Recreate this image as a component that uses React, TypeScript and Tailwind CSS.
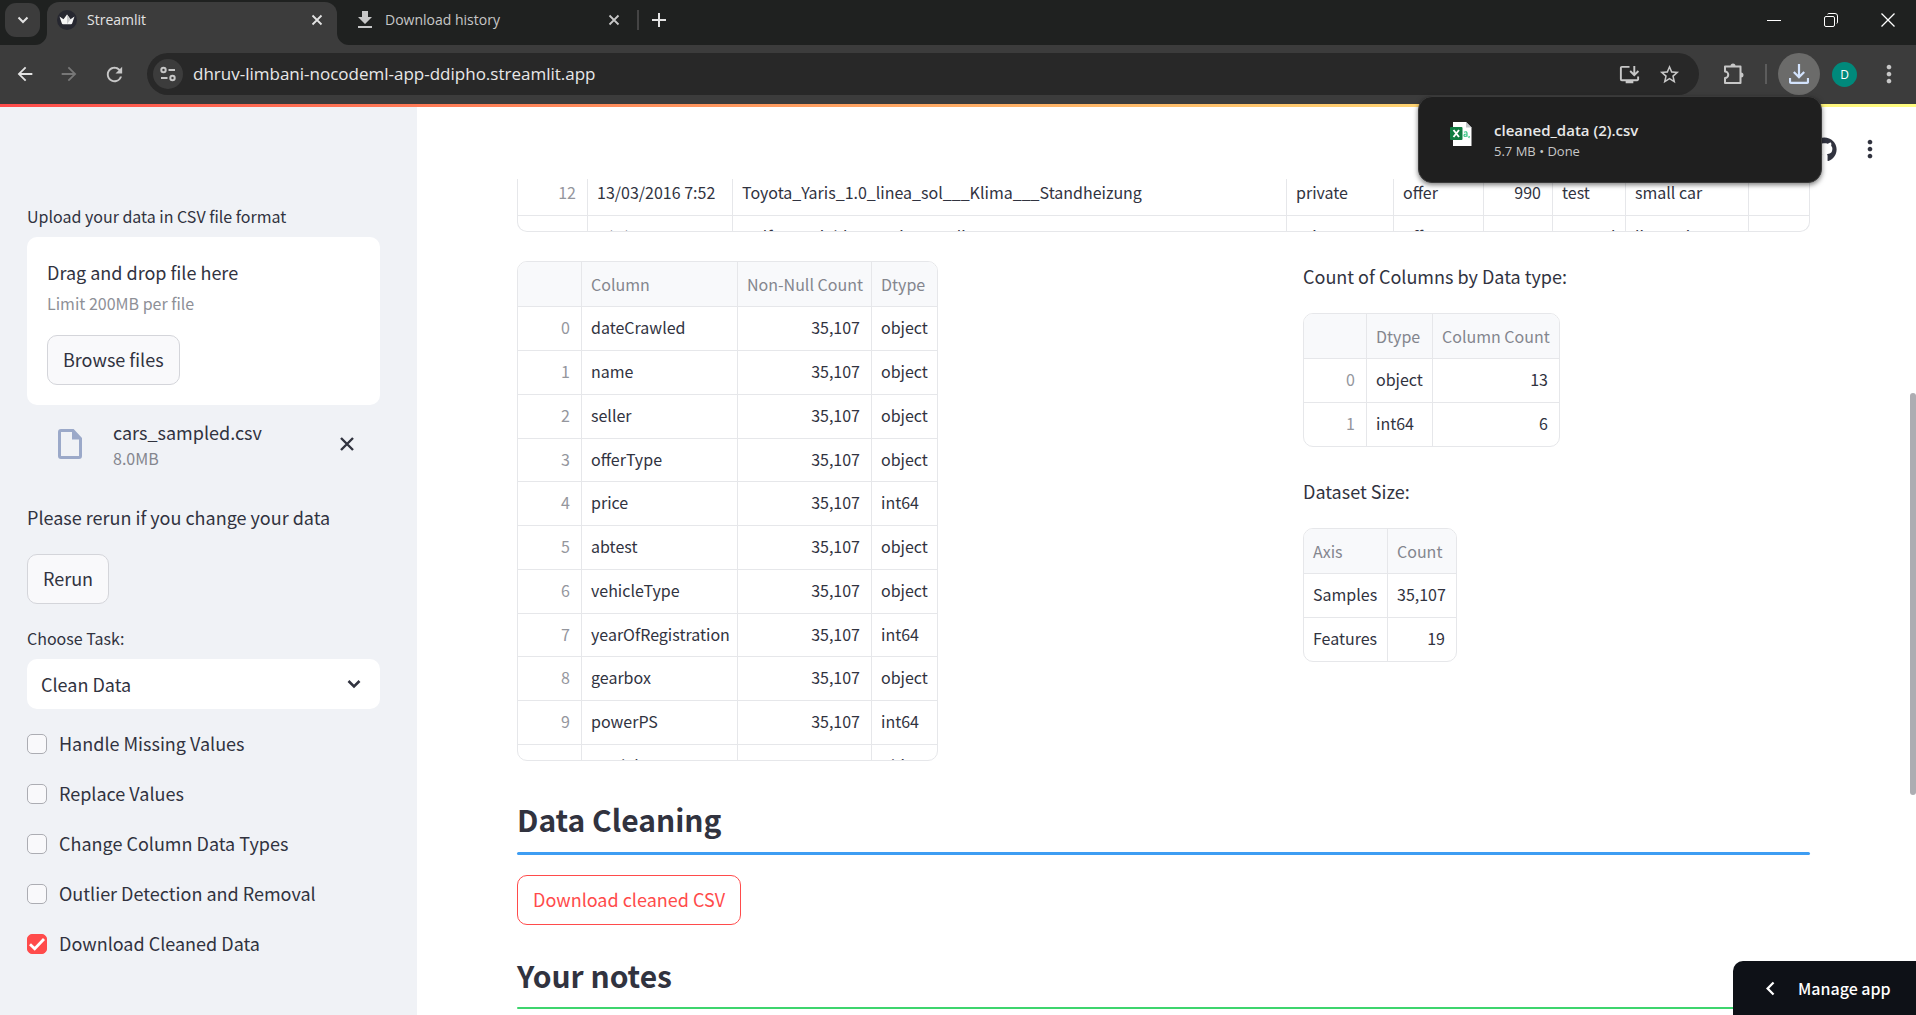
import React from "react";
import { FaGithub } from "react-icons/fa";
import {
  MdArrowBack,
  MdArrowForward,
  MdChevronLeft,
  MdDownload,
  MdMoreVert,
  MdOutlineInstallDesktop,
  MdRefresh,
  MdStarBorder,
} from "react-icons/md";

type Align = "left" | "right";
type Column = { label: string; width?: string; align?: Align; index?: boolean };

const infoColumns: Column[] = [
  { label: "", width: "w-[64px]", align: "right", index: true },
  { label: "Column", width: "w-[156px]" },
  { label: "Non-Null Count", width: "w-[134px]", align: "right" },
  { label: "Dtype", width: "w-[66px]" },
];
const infoRows = [
  ["0", "dateCrawled", "35,107", "object"],
  ["1", "name", "35,107", "object"],
  ["2", "seller", "35,107", "object"],
  ["3", "offerType", "35,107", "object"],
  ["4", "price", "35,107", "int64"],
  ["5", "abtest", "35,107", "object"],
  ["6", "vehicleType", "35,107", "object"],
  ["7", "yearOfRegistration", "35,107", "int64"],
  ["8", "gearbox", "35,107", "object"],
  ["9", "powerPS", "35,107", "int64"],
  ["10", "model", "35,107", "object"],
];

const dtypeColumns: Column[] = [
  { label: "", width: "w-[63px]", align: "right", index: true },
  { label: "Dtype", width: "w-[66px]" },
  { label: "Column Count", width: "w-[126px]", align: "right" },
];
const dtypeRows = [
  ["0", "object", "13"],
  ["1", "int64", "6"],
];

const sizeColumns: Column[] = [
  { label: "Axis", width: "w-[84px]" },
  { label: "Count", width: "w-[68px]", align: "right" },
];
const sizeRows = [
  ["Samples", "35,107"],
  ["Features", "19"],
];

const previewColumns: Column[] = [
  { label: "", width: "w-[70px]", align: "right", index: true },
  { label: "dateCrawled", width: "w-[145px]" },
  { label: "name" },
  { label: "seller", width: "w-[107px]" },
  { label: "offerType", width: "w-[90px]" },
  { label: "price", width: "w-[69px]", align: "right" },
  { label: "abtest", width: "w-[73px]" },
  { label: "vehicleType", width: "w-[123px]" },
  { label: "yearOfRegistration", width: "w-[60px]", align: "right" },
];
const previewRows = [
  ["12", "13/03/2016 7:52", "Toyota_Yaris_1.0_linea_sol___Klima___Standheizung", "private", "offer", "990", "test", "small car", ""],
  ["13", "9/3/2016 21:50", "Golf_4_TDi_blau_Variant__Klima", "private", "offer", "", "control", "limousine", ""],
];

function DataGrid({
  columns,
  rows,
  header = true,
  className = "",
}: {
  columns: Column[];
  rows: string[][];
  header?: boolean;
  className?: string;
}) {
  return (
    <table className={`table-fixed border-separate border-spacing-0 text-base leading-6 ${className}`}>
      <colgroup>
        {columns.map((c, i) => (
          <col key={i} className={c.width ?? ""} />
        ))}
      </colgroup>
      {header && (
        <thead>
          <tr className="h-[45px] bg-[#f8f9fb] text-[#84868e]">
            {columns.map((c, i) => (
              <th
                key={i}
                scope="col"
                className="overflow-hidden border-r border-b border-[#e6e7ea] pr-[9px] pb-[1px] pl-[9px] text-left font-normal whitespace-nowrap last:border-r-0"
              >
                {c.label}
              </th>
            ))}
          </tr>
        </thead>
      )}
      <tbody>
        {rows.map((row, r) => (
          <tr key={r} className="h-[44px] [&:nth-child(4n)]:h-[43px] [&:last-child]:h-[43px] [&:last-child>td]:border-b-0">
            {row.map((value, i) => (
              <td
                key={i}
                className={`overflow-hidden border-r border-b border-[#e6e7ea] pt-0 pr-[11px] pb-[3px] pl-[9px] whitespace-nowrap last:border-r-0 ${
                  columns[i].align === "right" ? "text-right" : "text-left"
                } ${columns[i].index ? "text-[#94969d]" : "text-[#31333f]"}`}
              >
                {value}
              </td>
            ))}
          </tr>
        ))}
      </tbody>
    </table>
  );
}

function CloseIcon({ className }: { className: string }) {
  return (
    <svg viewBox="0 0 12 12" className={className} fill="none" stroke="currentColor" strokeWidth="1.8" aria-hidden="true">
      <path d="M1.5 1.5l9 9M10.5 1.5l-9 9" />
    </svg>
  );
}

function BrowserTabs() {
  return (
    <div className="flex h-[45px] items-end bg-[#1f2120] pl-[5px] text-[#e3e3e3]">
      <button aria-label="Search tabs" className="mb-2 flex h-[34px] w-[35px] items-center justify-center rounded-[11px] bg-[#3c3c3c]">
        <svg viewBox="0 0 12 8" className="h-[8px] w-[12px]" fill="none" stroke="currentColor" strokeWidth="2" aria-hidden="true">
          <path d="M1.5 1.5L6 6l4.500-4.500" />
        </svg>
      </button>
      <div className="relative ml-[7px] flex h-[43px] w-[290px] items-center rounded-t-[12px] bg-[#3c3c3c] pr-[11px] pb-[7px] pl-[10px]">
        <svg viewBox="0 0 12 12" className="absolute bottom-0 -left-[12px] h-3 w-3" aria-hidden="true">
          <path d="M12 0v12H0A12 12 0 0 0 12 0z" fill="#3c3c3c" />
        </svg>
        <svg viewBox="0 0 12 12" className="absolute -right-[12px] bottom-0 h-3 w-3" aria-hidden="true">
          <path d="M0 0v12h12A12 12 0 0 1 0 0z" fill="#3c3c3c" />
        </svg>
        <svg viewBox="0 0 20 20" className="h-5 w-5" aria-hidden="true">
          <circle cx="10" cy="10" r="10" fill="#262730" />
          <path d="M2.500 6.500l4 2.800L10 4.500l3.500 4.800 4-2.800-2.300 6.800q-.3.900-1.200.9H6q-.9 0-1.200-.9z" fill="#f5f5f5" />
          <path d="M10 4.500l3.500 4.800-3.500 4.900z" fill="#c9cacc" />
        </svg>
        <span className="ml-[10px] flex-1 text-[14px] leading-5">Streamlit</span>
        <button aria-label="Close tab" className="p-[3px]">
          <CloseIcon className="h-3 w-3" />
        </button>
      </div>
      <div className="flex h-[43px] w-[300px] items-center pr-[14px] pb-[7px] pl-[16px] text-[#c7c7c7]">
        <MdDownload className="h-6 w-6" />
        <span className="ml-[8px] flex-1 text-[14px] leading-5">Download history</span>
        <button aria-label="Close tab" className="p-[3px]">
          <CloseIcon className="h-3 w-3" />
        </button>
      </div>
      <div className="mb-[15px] h-5 w-[2px] bg-[#444]" />
      <button aria-label="New tab" className="mb-[18px] ml-[13px]">
        <svg viewBox="0 0 14 14" className="h-[14px] w-[14px]" stroke="currentColor" strokeWidth="2" aria-hidden="true">
          <path d="M7 0v14M0 7h14" />
        </svg>
      </button>
      <div className="ml-auto flex h-full items-center gap-[43px] pr-[21px] pb-[6px] text-white">
        <button aria-label="Minimize">
          <svg viewBox="0 0 14 14" className="h-[14px] w-[14px]" stroke="currentColor" aria-hidden="true">
            <path d="M0 7.500h14" />
          </svg>
        </button>
        <button aria-label="Restore">
          <svg viewBox="0 0 14 14" className="h-[14px] w-[14px]" fill="none" stroke="currentColor" aria-hidden="true">
            <rect x=".5" y="3.500" width="10" height="10" rx="1.500" />
            <path d="M3.500 1.200Q4 .5 5 .5h6q2.500 0 2.500 2.500v6q0 1-.7 1.500" />
          </svg>
        </button>
        <button aria-label="Close window">
          <svg viewBox="0 0 14 14" className="h-[14px] w-[14px]" stroke="currentColor" strokeWidth="1.300" aria-hidden="true">
            <path d="M.5.5l13 13M13.500.5l-13 13" />
          </svg>
        </button>
      </div>
    </div>
  );
}

function BrowserToolbar() {
  return (
    <div className="relative flex h-[59px] items-center bg-[#3c3c3c] pr-[13px] pb-[1px] pl-[14px] text-[#c7c7c7]">
      <button aria-label="Back" className="text-[#e3e3e3]">
        <MdArrowBack className="h-[22px] w-[22px]" />
      </button>
      <button aria-label="Forward" className="ml-[22px] text-[#777]">
        <MdArrowForward className="h-[22px] w-[22px]" />
      </button>
      <button aria-label="Reload" className="ml-[23px]">
        <MdRefresh className="h-[23px] w-[23px]" />
      </button>
      <div className="ml-[21px] flex h-[42px] min-w-0 flex-1 items-center rounded-full bg-[#282828] pr-[18px] pl-[6px]">
        <button aria-label="View site information" className="flex h-[30px] w-[30px] items-center justify-center rounded-full bg-[#3c3c3c]">
          <svg viewBox="0 0 16 16" className="h-4 w-4" fill="none" stroke="currentColor" strokeWidth="2" aria-hidden="true">
            <circle cx="3.500" cy="4" r="2.200" />
            <path d="M8.500 4H15M1 12h6.500" />
            <circle cx="12.500" cy="12" r="2.200" />
          </svg>
        </button>
        <input
          aria-label="Address"
          readOnly
          value="dhruv-limbani-nocodeml-app-ddipho.streamlit.app"
          className="ml-[10px] min-w-0 flex-1 bg-transparent text-[17px] leading-6 text-[#e8e8e8] outline-none"
        />
        <button aria-label="Install app">
          <MdOutlineInstallDesktop className="h-[23px] w-[23px]" />
        </button>
        <button aria-label="Bookmark" className="ml-[17px]">
          <MdStarBorder className="h-[23px] w-[23px]" />
        </button>
      </div>
      <button aria-label="Extensions" className="ml-[22px]">
        <svg viewBox="0 0 24 24" className="h-6 w-6" fill="none" stroke="currentColor" strokeWidth="2" strokeLinejoin="round" aria-hidden="true">
          <path d="M4 4.500h15.500V21H4v-5a3.200 3.200 0 0 0 0-6.500z" />
          <path d="M9.500 4a2.500 2.500 0 0 1 5 0zM20 10.500a2.500 2.500 0 0 1 0 5z" fill="currentColor" stroke="none" />
        </svg>
      </button>
      <div className="ml-[20px] h-5 w-[2px] bg-[#5c5c5c]" />
      <button aria-label="Downloads" className="ml-[11px] flex h-[42px] w-[42px] items-center justify-center rounded-full bg-[#6b6b6a] text-[#d3e3fd]">
        <svg viewBox="0 0 20 20" className="h-5 w-5" fill="none" stroke="currentColor" strokeWidth="2.200" aria-hidden="true">
          <path d="M10 0v13M4.800 8L10 13.200 15.200 8M1 14v3.500q0 1.400 1.400 1.400h15.200q1.400 0 1.400-1.400V14" />
        </svg>
      </button>
      <button aria-label="Profile" className="ml-3 h-[25px] w-[25px] rounded-full bg-[#00897b] text-xs leading-[25px] text-white">
        D
      </button>
      <button aria-label="Menu" className="ml-[18px]">
        <MdMoreVert className="h-[28px] w-[28px]" />
      </button>

      <div
        role="status"
        className="absolute top-[51px] right-[94px] z-30 flex h-[87px] w-[404px] items-start rounded-[14px] border border-[#3a3a3a] bg-[#1f1f1f] pt-[22px] pl-[31px] shadow-[0_2px_5px_rgba(0,0,0,0.5)]"
      >
        <svg viewBox="0 0 22 24" className="mt-[3px] h-6 w-[22px]" aria-hidden="true">
          <path d="M3 0h13l5.500 5.500V24H3z" fill="#fff" />
          <path d="M16 0l5.500 5.500H16z" fill="#c4c8cb" />
          <rect y="5" width="12.500" height="13" rx="1" fill="#107c41" />
          <path d="M3.500 8l5.500 7M9 8l-5.500 7" stroke="#fff" strokeWidth="1.900" />
          <path d="M14 10.200q3-1.200 3 1v3.600M17 12q-3-.2-3 1.500t3 .3M19.300 14l-.5 2" fill="none" stroke="#33c481" strokeWidth="1.200" />
        </svg>
        <div className="ml-[22px]">
          <p className="text-[15px] leading-[22px] font-semibold text-[#e8e8e8]">cleaned_data (2).csv</p>
          <p className="text-[13px] leading-[20px] text-[#c7c7c7]">5.7 MB • Done</p>
        </div>
      </div>
    </div>
  );
}

const tasks = [
  "Handle Missing Values",
  "Replace Values",
  "Change Column Data Types",
  "Outlier Detection and Removal",
  "Download Cleaned Data",
];

function Sidebar() {
  return (
    <aside className="w-[417px] shrink-0 bg-[#f0f2f6] pt-[97px] pr-[37px] pl-[27px]">
      <p className="text-base leading-6">Upload your data in CSV file format</p>
      <section className="mt-[9px] h-[168px] rounded-[10px] bg-white px-5 pt-[21px]">
        <p className="text-lg leading-7">Drag and drop file here</p>
        <p className="mt-[5px] text-base leading-6 text-[#8e9097]">Limit 200MB per file</p>
        <button className="mt-5 h-[50px] rounded-[10px] border border-[#d4d5da] bg-[#f9f9fb] px-[15px] pb-[2px] text-lg leading-7">
          Browse files
        </button>
      </section>
      <div className="flex items-center pt-[13px] pr-[25px] pl-[31px]">
        <svg viewBox="0 0 24 30" className="h-[30px] w-6" aria-hidden="true">
          <path d="M3 1.500h12l7.500 8V27q0 1.500-1.500 1.500H3q-1.500 0-1.500-1.500V3q0-1.500 1.500-1.500z" fill="none" stroke="#9ba9c9" strokeWidth="3" />
          <path d="M14 1v9.500h9.500z" fill="#9ba9c9" />
        </svg>
        <div className="ml-[31px] flex-1">
          <p className="text-lg leading-7">cars_sampled.csv</p>
          <p className="text-base leading-6 text-[#84868e]">8.0MB</p>
        </div>
        <button aria-label="Remove file">
          <CloseIcon className="h-4 w-4" />
        </button>
      </div>
      <p className="mt-[33px] text-lg leading-7">Please rerun if you change your data</p>
      <button className="mt-[23px] h-[50px] rounded-[10px] border border-[#d4d5da] bg-[#f9f9fb] px-[15px] pb-[2px] text-lg leading-7">Rerun</button>
      <label htmlFor="task" className="mt-[22px] block text-base leading-6">
        Choose Task:
      </label>
      <div className="relative mt-[9px]">
        <select id="task" defaultValue="Clean Data" className="h-[50px] w-full appearance-none rounded-[10px] bg-white px-[14px] pb-[1px] text-lg">
          <option>Clean Data</option>
        </select>
        <svg viewBox="0 0 14 10" className="pointer-events-none absolute top-[20px] right-[19px] h-[10px] w-[14px]" fill="none" stroke="currentColor" strokeWidth="2.600" aria-hidden="true">
          <path d="M1.500 2L7 7.500 12.500 2" />
        </svg>
      </div>
      <div className="mt-5 flex flex-col gap-[20px]">
        {tasks.map((task) => (
          <label key={task} className="relative flex h-[30px] items-center gap-[12px] text-lg leading-7">
            <input
              type="checkbox"
              defaultChecked={task === "Download Cleaned Data"}
              className="peer h-5 w-5 appearance-none rounded-[5px] border border-[#acadb3] bg-[#f9f9fb] checked:border-[#ff4b4b] checked:bg-[#ff4b4b]"
            />
            <svg viewBox="0 0 20 20" className="pointer-events-none absolute left-0 hidden h-5 w-5 peer-checked:block" fill="none" stroke="#fff" strokeWidth="2.800" aria-hidden="true">
              <path d="M3 10.300l4.700 4.500L17 5" />
            </svg>
            <span className="pb-[2px]">{task}</span>
          </label>
        ))}
      </div>
    </aside>
  );
}

export default function App() {
  return (
    <div className="flex h-screen flex-col overflow-hidden bg-white font-['Open_Sans',sans-serif]">
      <BrowserTabs />
      <BrowserToolbar />
      <div className="h-[3px] shrink-0 bg-linear-to-r from-[#ff4b4b] to-[#fffd80]" />
      <div className="relative flex min-h-0 flex-1 overflow-hidden font-['Source_Sans_Pro','Noto_Sans_CJK_SC',sans-serif] text-[#31333f]">
        <Sidebar />
        <main className="min-w-0 flex-1 pr-[106px] pl-[100px]">
          <header className="-mr-[106px] flex h-[72px] items-center justify-end gap-[19px] pt-3 pr-[32px]">
            <button aria-label="View source">
              <FaGithub className="h-[25px] w-[25px]" />
            </button>
            <button aria-label="App menu">
              <MdMoreVert className="h-[28px] w-[28px]" />
            </button>
          </header>

          <div className="h-[53px] overflow-hidden rounded-b-[10px] border border-t-0 border-[#e6e7ea]">
            <DataGrid columns={previewColumns} rows={previewRows} header={false} className="-mt-[7px] w-full" />
          </div>

          <div className="mt-[29px] grid grid-cols-[766fr_507fr] gap-5">
            <div className="h-[500px] w-[421px] overflow-hidden rounded-[10px] border border-[#e6e7ea]">
              <DataGrid columns={infoColumns} rows={infoRows} className="w-[420px]" />
            </div>
            <div>
              <p className="text-lg leading-[30px]">Count of Columns by Data type:</p>
              <div className="mt-[22px] w-fit overflow-hidden rounded-[10px] border border-[#e6e7ea]">
                <DataGrid columns={dtypeColumns} rows={dtypeRows} className="w-[255px]" />
              </div>
              <p className="mt-[29px] text-lg leading-[30px]">Dataset Size:</p>
              <div className="mt-[22px] w-fit overflow-hidden rounded-[10px] border border-[#e6e7ea]">
                <DataGrid columns={sizeColumns} rows={sizeRows} className="w-[152px]" />
              </div>
            </div>
          </div>

          <h2 className="mt-[36px] text-[30px] leading-[44px] font-semibold">Data Cleaning</h2>
          <hr className="mt-[11px] h-[3px] rounded border-0 bg-[#3d9df3]" />
          <button className="mt-5 h-[50px] rounded-[10px] border border-[#ff4b4b] bg-white px-[15px] pb-[2px] text-lg leading-7 text-[#ff4b4b]">
            Download cleaned CSV
          </button>
          <h2 className="mt-[28px] text-[30px] leading-[44px] font-semibold">Your notes</h2>
          <hr className="mt-[10px] h-[2px] rounded border-0 bg-[#3dd56d]" />
        </main>
        <div className="absolute top-[286px] right-0 h-[402px] w-[6px] rounded-[3px] bg-[#adadb2]" />
        <button className="absolute right-0 bottom-0 flex h-[54px] w-[183px] items-center rounded-tl-[10px] bg-[#0e1117] pl-[24px] text-base font-medium text-white">
          <MdChevronLeft className="h-[27px] w-[27px]" />
          <span className="ml-[14px] pb-[1px]">Manage app</span>
        </button>
      </div>
    </div>
  );
}
